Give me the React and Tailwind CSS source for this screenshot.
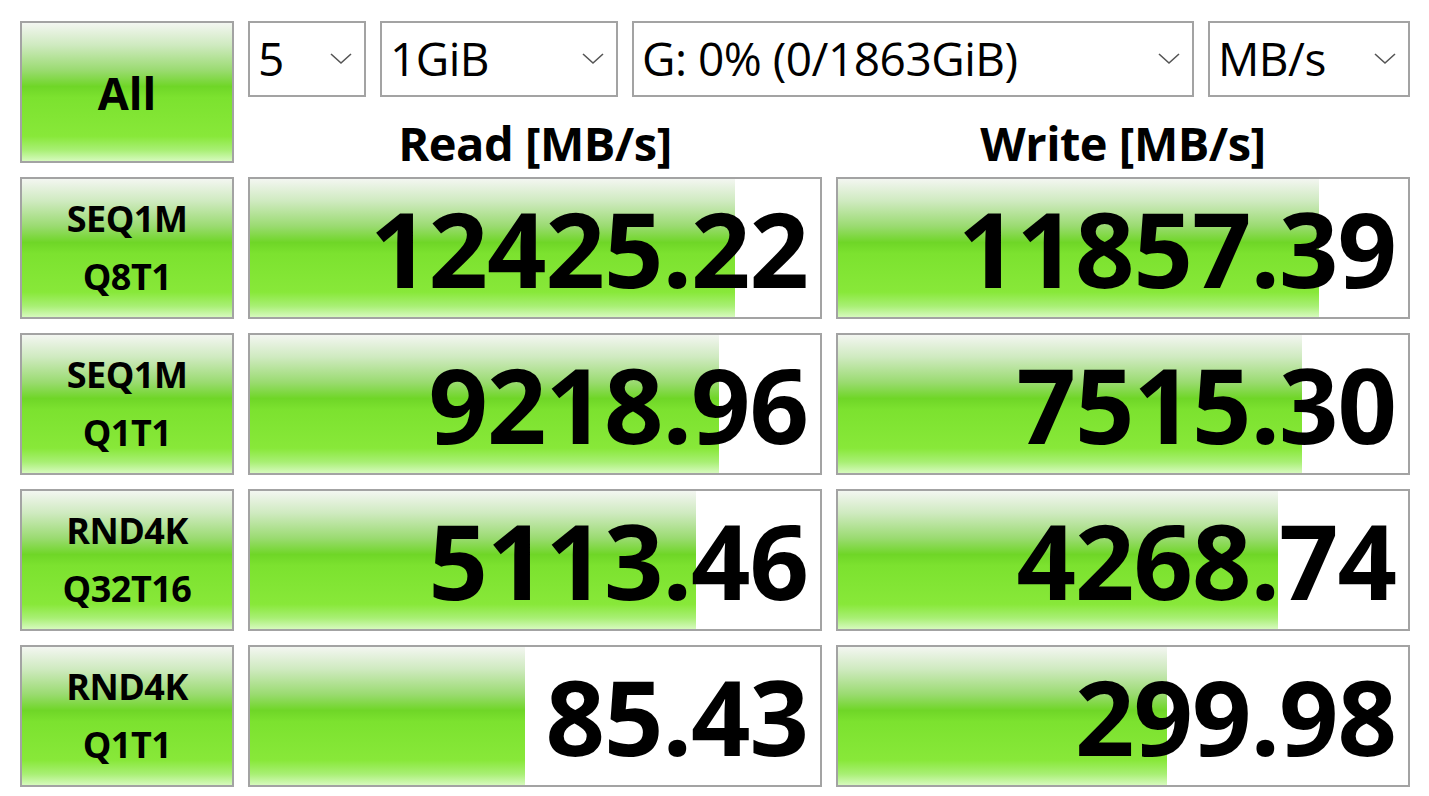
import React from 'react'

const green =
  'bg-[linear-gradient(to_bottom,#f3f6f1_0%,#cfeac0_16%,#9bdb72_34%,#6fd627_46%,#7ce22f_54%,#88e839_82%,#a8ef74_92%,#d6fabd_100%)]'

const rows = [
  { a: 'SEQ1M', b: 'Q8T1', read: '12425.22', rw: 85, write: '11857.39', ww: 84.4 },
  { a: 'SEQ1M', b: 'Q1T1', read: '9218.96', rw: 82.2, write: '7515.30', ww: 81.4 },
  { a: 'RND4K', b: 'Q32T16', read: '5113.46', rw: 78.2, write: '4268.74', ww: 77.2 },
  { a: 'RND4K', b: 'Q1T1', read: '85.43', rw: 48.3, write: '299.98', ww: 57.8 },
]

function Select({ value, width }) {
  return (
    <div
      className={`${width} h-[76px] border-2 border-[#a3a3a3] bg-white flex items-center justify-between pl-[8px] pr-[12px]`}
    >
      <span className="text-[46px] leading-none text-black tracking-[-0.5px] pb-[2px]">{value}</span>
      <svg width="22" height="12" viewBox="0 0 22 12" className="shrink-0">
        <path d="M1 1 L11 10 L21 1" fill="none" stroke="#555" strokeWidth="1.6" />
      </svg>
    </div>
  )
}

function Cell({ value, pct }) {
  return (
    <div className="relative w-[574px] h-[142px] border-2 border-[#a3a3a3] bg-white overflow-hidden">
      <div className={`absolute left-0 top-0 bottom-0 ${green}`} style={{ width: `${pct}%` }} />
      <div className="relative h-full flex items-center justify-end pr-[12px]">
        <span className="text-[104px] font-bold leading-none text-black tracking-[-1px]">{value}</span>
      </div>
    </div>
  )
}

export default function App() {
  return (
    <div
      className="w-[1429px] h-[796px] bg-white pt-[21px] pl-[20px] flex flex-col gap-[14px]"
      style={{ fontFamily: '"Open Sans", "Noto Sans", sans-serif' }}
    >
      <div className="flex gap-[14px]">
        <div
          className={`w-[214px] h-[142px] border-2 border-[#a3a3a3] ${green} flex items-center justify-center`}
        >
          <span className="text-[45px] font-bold text-black leading-none">All</span>
        </div>
        <div className="flex flex-col">
          <div className="flex gap-[14px]">
            <Select value="5" width="w-[118px]" />
            <Select value="1GiB" width="w-[238px]" />
            <Select value="G: 0% (0/1863GiB)" width="w-[562px]" />
            <Select value="MB/s" width="w-[202px]" />
          </div>
          <div className="flex gap-[14px] h-[66px] pt-[26px]">
            <div className="w-[574px] flex items-center justify-center text-[47px] font-bold text-black leading-none tracking-[-0.5px]">
              Read [MB/s]
            </div>
            <div className="w-[574px] flex items-center justify-center text-[47px] font-bold text-black leading-none tracking-[-0.5px]">
              Write [MB/s]
            </div>
          </div>
        </div>
      </div>

      {rows.map((r, i) => (
        <div key={i} className="flex gap-[14px]">
          <div
            className={`w-[214px] h-[142px] border-2 border-[#a3a3a3] ${green} flex flex-col items-center justify-center gap-[22px]`}
          >
            <span className="text-[36px] font-bold leading-none text-black tracking-[-0.5px]">{r.a}</span>
            <span className="text-[36px] font-bold leading-none text-black tracking-[-0.5px]">{r.b}</span>
          </div>
          <Cell value={r.read} pct={r.rw} />
          <Cell value={r.write} pct={r.ww} />
        </div>
      ))}
    </div>
  )
}
